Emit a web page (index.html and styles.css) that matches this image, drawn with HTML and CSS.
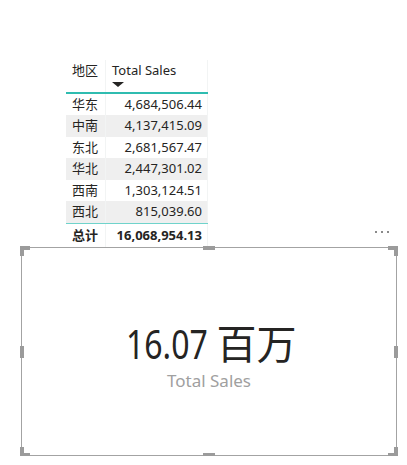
FILE: index.html
```html
<!DOCTYPE html>
<html lang="zh">
<head>
<meta charset="utf-8">
<link rel="stylesheet" href="styles.css">
</head>
<body>
<div class="page">
  <div class="matrix">
    <div class="row head">
      <div class="cell c1">地区</div>
      <div class="cell c2h">
        <span>Total Sales</span>
        <span class="sort"></span>
      </div>
    </div>
    <div class="row"><div class="cell c1">华东</div><div class="cell num">4,684,506.44</div></div>
    <div class="row alt"><div class="cell c1">中南</div><div class="cell num">4,137,415.09</div></div>
    <div class="row"><div class="cell c1">东北</div><div class="cell num">2,681,567.47</div></div>
    <div class="row alt"><div class="cell c1">华北</div><div class="cell num">2,447,301.02</div></div>
    <div class="row"><div class="cell c1">西南</div><div class="cell num">1,303,124.51</div></div>
    <div class="row alt"><div class="cell c1">西北</div><div class="cell num">815,039.60</div></div>
    <div class="row total"><div class="cell c1">总计</div><div class="cell num">16,068,954.13</div></div>
  </div>
  <div class="card">
    <div class="more"><span></span><span></span><span></span></div>
    <div class="h h-tl"></div>
    <div class="h h-tr"></div>
    <div class="h h-bl"></div>
    <div class="h h-br"></div>
    <div class="m m-t"></div>
    <div class="m m-b"></div>
    <div class="m m-l"></div>
    <div class="m m-r"></div>
    <div class="value"><span class="digits"><span class="narrow">16.07</span></span><span class="unit">百万</span></div>
    <div class="label">Total Sales</div>
  </div>
</div>
</body>
</html>
```
FILE: styles.css
```css
* { box-sizing: border-box; }
html, body { margin: 0; padding: 0; background: #fff; }
body {
  font-family: "Noto Sans", "Noto Sans CJK SC", sans-serif;
  color: #252423;
}
.page { padding-top: 60px; }

.matrix {
  margin-left: 66px;
  width: 142px;
  font-size: 13px;
}
.row {
  display: grid;
  grid-template-columns: 39.5px 1fr;
  height: 21.5px;
  line-height: 21.5px;
}
.row.alt { background: #efefef; }
.cell {
  border-right: 1px solid #f2f4f4;
  white-space: nowrap;
}
.c1 { padding-left: 6px; }
.num { text-align: right; padding-right: 5px; }

.row.head {
  height: 33.5px;
  line-height: 17px;
  border-bottom: 2px solid #2fbcb0;
}
.head .cell { padding-top: 1.5px; }
.c2h { padding-left: 6.5px; display: flex; flex-direction: column; align-items: flex-start; }
.sort {
  margin-top: 3.5px;
  width: 0; height: 0;
  border-left: 6.5px solid transparent;
  border-right: 6.5px solid transparent;
  border-top: 5.5px solid #252423;
}
.row.total {
  height: 24px;
  line-height: 22px;
  border-top: 1.5px solid #6fd3cb;
  font-weight: bold;
}

.card {
  position: relative;
  margin-top: 0.5px;
  margin-left: 21px;
  width: 376px;
  height: 209px;
  border: 1px solid #a3a3a3;
  padding-top: 69px;
  display: flex;
  flex-direction: column;
  align-items: center;
}
.value {
  height: 50px;
  display: flex;
  align-items: baseline;
  gap: 9px;
  color: #252423;
  margin-left: 4px;
  line-height: 50px;
}
.digits {
  font-family: "Noto Sans", sans-serif;
  font-size: 40px;
  width: 82px;
  display: inline-block;
}
.narrow {
  display: inline-block;
  transform: scaleX(0.8);
  transform-origin: left center;
}
.unit {
  font-family: "Noto Sans CJK SC", sans-serif;
  font-size: 40px;
}
.label {
  font-size: 17px;
  line-height: 22px;
  color: #a0a0a0;
  margin-top: 3px;
}
.h {
  position: absolute;
  width: 10px;
  height: 10px;
  border: 0 solid #9b9b9b;
}
.h-tl { left: -2px; top: -2px; border-top-width: 4px; border-left-width: 4px; }
.h-tr { right: -2px; top: -2px; border-top-width: 4px; border-right-width: 4px; }
.h-bl { left: -2px; bottom: -2px; border-bottom-width: 4px; border-left-width: 4px; }
.h-br { right: -2px; bottom: -2px; border-bottom-width: 4px; border-right-width: 4px; }
.m { position: absolute; background: #9b9b9b; }
.m-t { top: -2px; left: 181px; width: 12px; height: 4px; }
.m-b { bottom: -2px; left: 181px; width: 12px; height: 4px; }
.m-l { left: -2px; top: 98px; width: 4px; height: 12px; }
.m-r { right: -2px; top: 98px; width: 4px; height: 12px; }
.more {
  position: absolute;
  right: 7px;
  top: -17px;
  display: flex;
  gap: 4px;
}
.more span {
  width: 2px;
  height: 2px;
  background: #8a8a8a;
}
```
